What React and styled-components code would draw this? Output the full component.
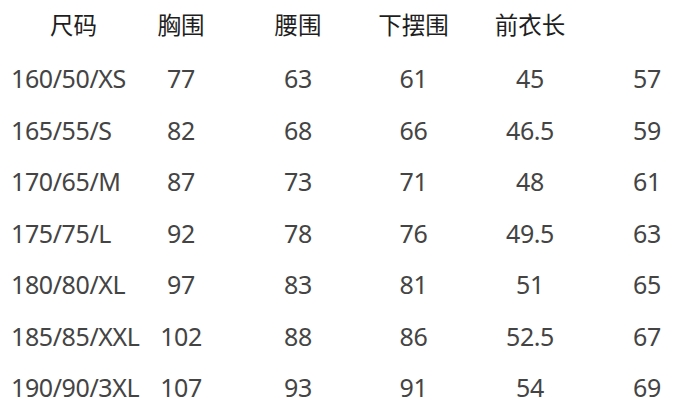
import React from "react";
import styled, { createGlobalStyle } from "styled-components";

const GlobalStyle = createGlobalStyle`
  html, body {
    margin: 0;
    padding: 0;
    background: #ffffff;
    overflow: hidden;
  }
  body {
    font-family: "Noto Sans", "Noto Sans CJK SC", sans-serif;
  }
`;

const Table = styled.div`
  display: grid;
  grid-template-columns: 122px 118px 116px 115px 118px 116px;
  grid-auto-rows: 51.5px;
  width: 705px;
`;

const HeadCell = styled.div`
  display: flex;
  align-items: center;
  justify-content: ${(p) => (p.$first ? "flex-start" : "center")};
  padding-left: ${(p) => (p.$first ? "50px" : "0")};
  font-family: "Noto Sans CJK SC", "Noto Sans", sans-serif;
  font-size: 23.5px;
  color: #1e1e1e;
  line-height: 1;
  padding-bottom: 2px;
`;

const Cell = styled.div`
  display: flex;
  align-items: center;
  justify-content: ${(p) => (p.$first ? "flex-start" : "center")};
  padding-left: ${(p) => (p.$first ? "11px" : "0")};
  padding-top: 3px;
  font-size: 25px;
  color: #444444;
  line-height: 1;
  letter-spacing: -0.4px;
`;

const headers = ["尺码", "胸围", "腰围", "下摆围", "前衣长", ""];

const rows = [
  ["160/50/XS", "77", "63", "61", "45", "57"],
  ["165/55/S", "82", "68", "66", "46.5", "59"],
  ["170/65/M", "87", "73", "71", "48", "61"],
  ["175/75/L", "92", "78", "76", "49.5", "63"],
  ["180/80/XL", "97", "83", "81", "51", "65"],
  ["185/85/XXL", "102", "88", "86", "52.5", "67"],
  ["190/90/3XL", "107", "93", "91", "54", "69"],
];

export default function App() {
  return (
    <>
      <GlobalStyle />
      <Table>
        {headers.map((h, i) => (
          <HeadCell key={"h" + i} $first={i === 0}>
            {h}
          </HeadCell>
        ))}
        {rows.map((row) =>
          row.map((v, i) => (
            <Cell key={row[0] + i} $first={i === 0}>
              {v}
            </Cell>
          ))
        )}
      </Table>
    </>
  );
}
